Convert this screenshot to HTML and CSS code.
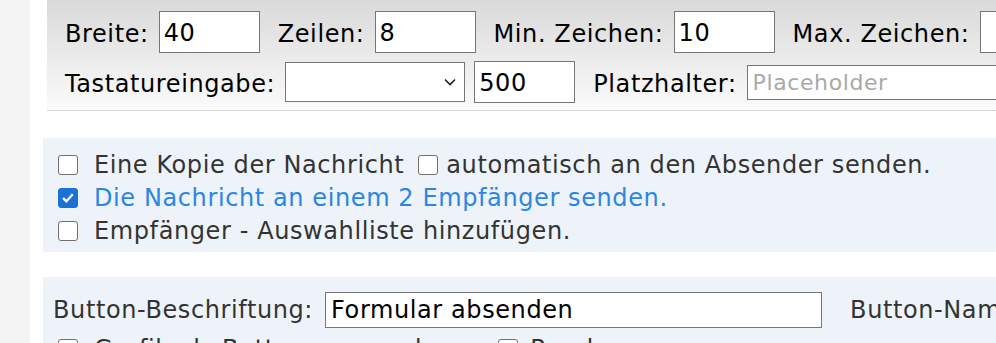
FILE: index.html
```html
<!DOCTYPE html>
<html lang="de">
<head>
<meta charset="utf-8">
<title>Formular</title>
<link rel="stylesheet" href="styles.css">
</head>
<body>
<div class="page">
  <aside class="side"></aside>
  <main class="main">
    <section class="toolbar">
      <div class="row">
        <label class="field"><span class="lbl">Breite:</span><input class="num" type="text" value="40"></label>
        <label class="field"><span class="lbl">Zeilen:</span><input class="num" type="text" value="8"></label>
        <label class="field"><span class="lbl">Min. Zeichen:</span><input class="num" type="text" value="10"></label>
        <label class="field"><span class="lbl">Max. Zeichen:</span><input class="num" type="text" value=""></label>
      </div>
      <div class="row">
        <label class="field"><span class="lbl">Tastatureingabe:</span><select class="sel"><option></option></select><input class="num short" type="text" value="500"></label>
        <label class="field"><span class="lbl">Platzhalter:</span><input class="ph" type="text" placeholder="Placeholder"></label>
      </div>
    </section>

    <section class="panel opts">
      <div class="opt"><input type="checkbox" class="cb"><span class="txt">Eine Kopie der Nachricht</span><input type="checkbox" class="cb inl"><span>automatisch an den Absender senden.</span></div>
      <div class="opt on"><input type="checkbox" class="cb" checked><span class="txt">Die Nachricht an einem 2 Empfänger senden.</span></div>
      <div class="opt"><input type="checkbox" class="cb"><span class="txt">Empfänger - Auswahlliste hinzufügen.</span></div>
    </section>

    <section class="panel btns">
      <div class="brow">
        <span class="blbl">Button-Beschriftung:</span><input class="wide" type="text" value="Formular absenden"><span class="blbl next">Button-Name:</span>
      </div>
      <div class="opt sub"><input type="checkbox" class="cb"><span class="txt">Grafik als Button verwenden</span><input type="checkbox" class="cb inl2"><span>Rand</span></div>
    </section>
  </main>
</div>
</body>
</html>
```
FILE: styles.css
```css
html, body {
  margin: 0;
  padding: 0;
  background: #ffffff;
}
body {
  font-family: "DejaVu Sans", Verdana, sans-serif;
  font-size: 24px;
  letter-spacing: 0.6px;
  color: #000;
  overflow: hidden;
  width: 996px;
  height: 343px;
}
.page {
  display: flex;
  height: 343px;
  overflow: hidden;
}
.side {
  flex: none;
  width: 30px;
  background: #f3f3f3;
}
.main {
  flex: 1;
  min-width: 0;
  padding-left: 13px;
  overflow: hidden;
}
.toolbar {
  margin-left: 4px;
  padding: 11px 0 7px 18px;
  background: linear-gradient(#d9d9d9, #fbfbfb);
  border-bottom: 1px solid #d6d6d6;
  display: flex;
  flex-direction: column;
  gap: 8px;
  white-space: nowrap;
}
.row {
  display: flex;
  align-items: center;
  gap: 18px;
  height: 42px;
}
.field {
  display: flex;
  align-items: center;
  flex: none;
}
.lbl {
  margin-right: 10px;
  padding-top: 3px;
}
input, select {
  font-family: inherit;
  font-size: 24px;
  letter-spacing: 0.6px;
  color: #000;
  box-sizing: border-box;
  border: 1px solid #767676;
  border-radius: 0;
  background: #fff;
  margin: 0;
  outline: none;
}
.num {
  width: 101px;
  height: 42px;
  padding: 2px 4px 0 4px;
  flex: none;
}
.short {
  margin-left: 9px;
}
.sel {
  appearance: none;
  -webkit-appearance: none;
  width: 180px;
  height: 40px;
  flex: none;
  background-image: url("data:image/svg+xml,%3Csvg xmlns='http://www.w3.org/2000/svg' width='12' height='8' viewBox='0 0 12 8'%3E%3Cpath d='M1 1.5 L6 6.5 L11 1.5' fill='none' stroke='%23222' stroke-width='1.6'/%3E%3C/svg%3E");
  background-repeat: no-repeat;
  background-position: right 8px center;
  background-size: 12px 8px;
}
.ph {
  width: 320px;
  height: 35px;
  font-size: 22px;
  padding: 0 5px;
  flex: none;
}
.ph::placeholder {
  color: #a9a9a9;
}
.panel {
  background: #eef3fa;
  color: #333;
  white-space: nowrap;
}
.opts {
  margin-top: 27px;
  padding: 10px 15px 5px 15px;
  height: 114px;
  box-sizing: border-box;
}
.opt {
  display: flex;
  align-items: center;
  height: 33px;
}
.cb {
  appearance: none;
  -webkit-appearance: none;
  box-sizing: border-box;
  width: 20px;
  height: 20px;
  margin: 0 16px 0 0;
  flex: none;
  border: 1.5px solid #6f6f6f;
  border-radius: 3px;
  background: #fff;
}
.cb:checked {
  background-color: #1a72d6;
  border-color: #1a72d6;
  background-image: url("data:image/svg+xml,%3Csvg xmlns='http://www.w3.org/2000/svg' width='20' height='20' viewBox='0 0 20 20'%3E%3Cpath d='M4.5 10.2 L8.2 13.8 L15.2 5.8' fill='none' stroke='%23fff' stroke-width='2.6'/%3E%3C/svg%3E");
  background-size: 100% 100%;
}
.cb.inl {
  margin-left: 14px;
  margin-right: 8px;
}
.cb.inl2 {
  margin-left: 45px;
  margin-right: 12px;
}
.on .txt {
  color: #2a86e2;
}
.btns {
  margin-top: 25px;
  padding: 15px 10px 0 10px;
  height: 100px;
  box-sizing: border-box;
}
.brow {
  display: flex;
  align-items: center;
  height: 36px;
}
.blbl {
  flex: none;
}
.wide {
  width: 497px;
  height: 36px;
  padding: 0 5px;
  margin-left: 12px;
  flex: none;
}
.next {
  margin-left: 28px;
}
.sub {
  margin-left: 5px;
  margin-top: 4px;
}
```
